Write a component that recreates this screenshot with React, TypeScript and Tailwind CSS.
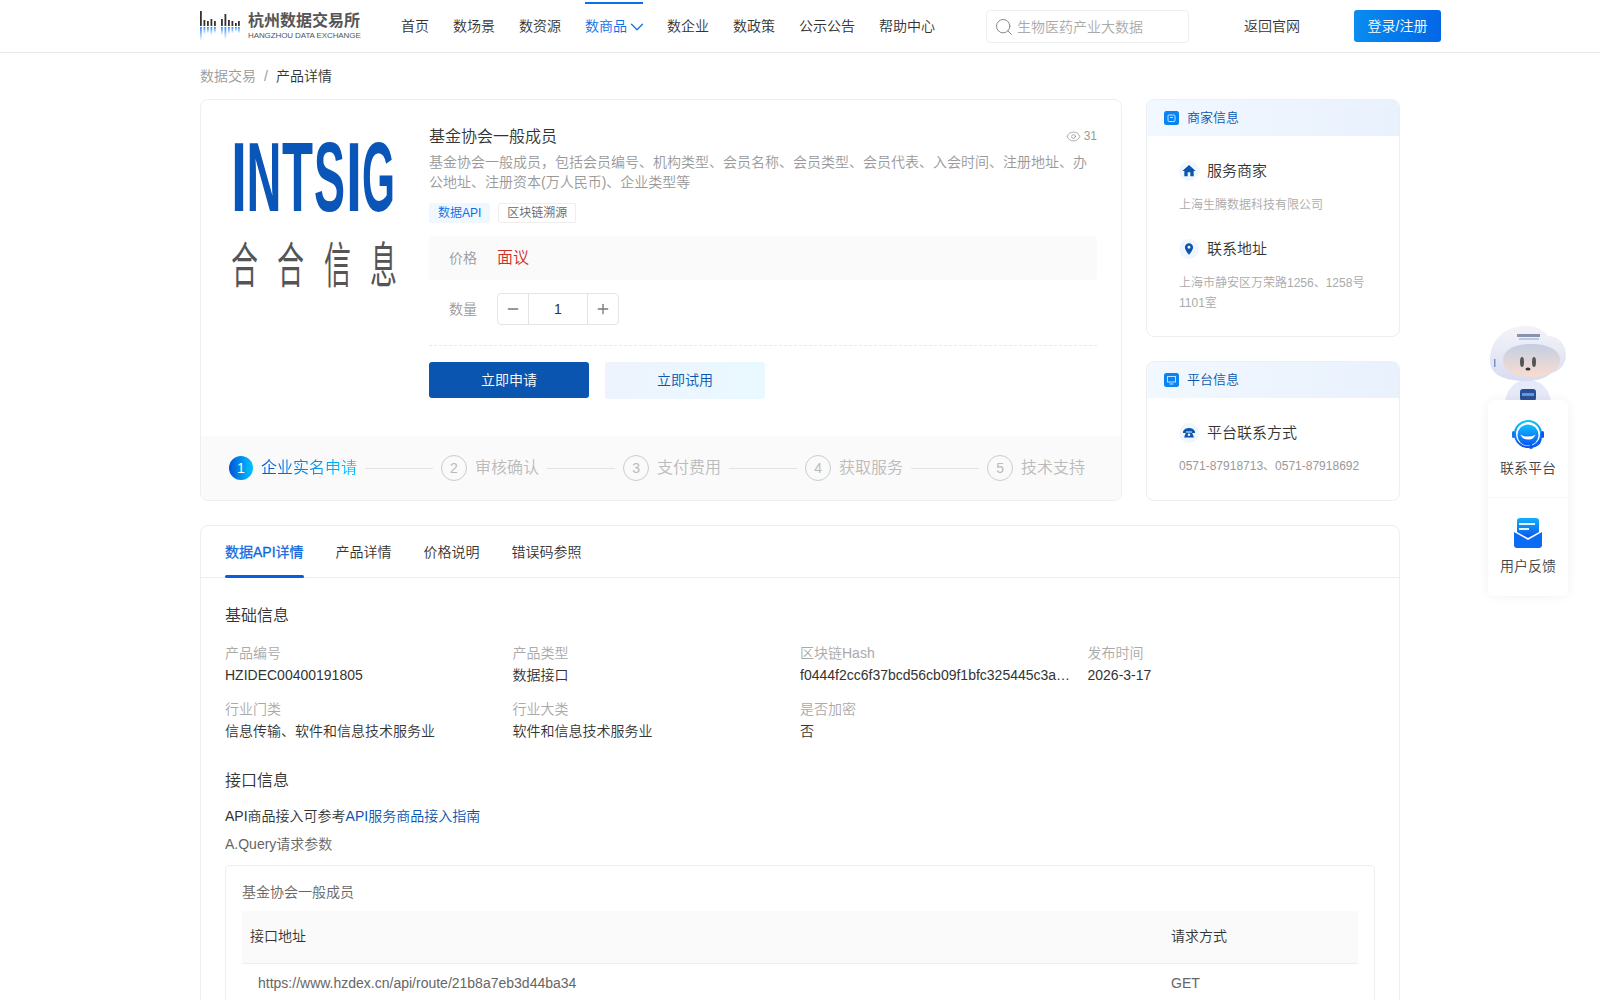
import React from "react";
import { ChevronDown, Eye, Minus, Plus, Search } from "lucide-react";
import { MdHome, MdLocationOn } from "react-icons/md";

const font = { fontFamily: '"Liberation Sans","Noto Sans CJK SC",sans-serif' };

function LogoBars() {
  return (
    <svg width="41" height="30" viewBox="0 0 41 30" className="shrink-0">
      <defs>
        <linearGradient id="lb" x1="0" y1="0" x2="0" y2="1">
          <stop offset="0" stopColor="#2f8cf5" />
          <stop offset="1" stopColor="#ffffff" />
        </linearGradient>
      </defs>
      {[[0, 15], [3.5, 6], [7, 5], [10.5, 7], [14, 5], [21, 7], [24.500, 12], [28, 6], [31.500, 5], [35, 3], [38, 5]].map(([x, h], i) => (
        <g key={i}>
          <rect x={x} y={15 - h} width="1.800" height={h} fill="#333" />
          <rect x={x} y={16} width="1.800" height={Math.min(14, h * 0.9 + 2)} fill="url(#lb)" />
        </g>
      ))}
    </svg>
  );
}

function Logo() {
  return (
    <div className="flex items-center gap-[7px] w-[162px] h-[30px]">
      <LogoBars />
      <div className="flex flex-col">
        <span className="text-[16px] leading-[18px] font-bold text-[#555] whitespace-nowrap">杭州数据交易所</span>
        <span className="text-[8px] leading-[11px] text-[#555] whitespace-nowrap tracking-[-0.1px]">HANGZHOU DATA EXCHANGE</span>
      </div>
    </div>
  );
}

function Header() {
  const items = ["首页", "数场景", "数资源", "数商品", "数企业", "数政策", "公示公告", "帮助中心"];
  return (
    <header className="h-[53px] border-b border-[#e8e8e8] bg-white pl-[200px] flex items-center">
      <Logo />
      <nav className="flex gap-6 ml-[39px] h-full">
        {items.map((t) =>
          t === "数商品" ? (
            <div key={t} className="relative flex items-center text-[14px] text-[#0a6fe8] pt-[1px]">
              <div className="absolute top-[2px] left-0 right-0 h-[2px] bg-[#0a6fe8]" />
              {t}
              <ChevronDown size={22} strokeWidth={1.3} className="-mr-[5px] -ml-[1px]" />
            </div>
          ) : (
            <div key={t} className="flex items-center text-[14px] text-[#333] pt-[1px]">{t}</div>
          )
        )}
      </nav>
      <div className="ml-[51px] w-[203px] h-[33px] border border-[#efefef] rounded-[4px] flex items-center pl-[7px] gap-[3px] mt-[1px]">
        <Search size={20} strokeWidth={1.2} className="text-[#888]" />
        <span className="text-[14px] text-[#aaa] pt-[1px]">生物医药产业大数据</span>
      </div>
      <div className="ml-[55px] text-[14px] text-[#333] pt-[1px]">返回官网</div>
      <div className="ml-[54px] w-[87px] h-[32px] rounded-[3px] bg-gradient-to-r from-[#0a8cf0] to-[#0566e6] text-white text-[14px] flex items-center justify-center">登录/注册</div>
    </header>
  );
}

function IntsigLogo() {
  const letters: [string, number, number][] = [
    ["I", 17, 16],
    ["N", 32.5, 35],
    ["T", 68, 31],
    ["S", 100, 31],
    ["I", 132, 16],
    ["G", 148, 33],
  ];
  const han: [string, number][] = [["合", 17], ["合", 63], ["信", 110], ["息", 156]];
  return (
    <div className="w-[200px] h-[200px] shrink-0">
      <svg width="200" height="200" viewBox="0 0 200 200">
        {letters.map(([c, x, l], i) => (
          <text key={i} x={x} y="111" textLength={l} lengthAdjust="spacingAndGlyphs" fontSize="98" fontWeight="700" fill="#0a55b8" fontFamily="Liberation Sans">{c}</text>
        ))}
        {han.map(([c, x], i) => (
          <text key={i} transform={`translate(${x},183) scale(1,1.8)`} fontSize="27" fontWeight="400" fill="#555" fontFamily="Noto Sans CJK SC">{c}</text>
        ))}
      </svg>
    </div>
  );
}

function Step({ n, label, last, active }: { n: number; label: string; last?: boolean; active?: boolean }) {
  return (
    <>
      {active ? (
        <div className="w-6 h-6 rounded-full bg-gradient-to-r from-[#0052d9] to-[#00c6ff] text-white text-[14px] flex items-center justify-center shrink-0">{n}</div>
      ) : (
        <div className="w-[26px] h-[26px] rounded-full border border-[#ccc] text-[#bbb] text-[14px] flex items-center justify-center shrink-0">{n}</div>
      )}
      <span className={active ? "text-[16px] bg-gradient-to-r from-[#0052d9] to-[#00c6ff] bg-clip-text text-transparent whitespace-nowrap" : "text-[16px] text-[#bbb] whitespace-nowrap"}>{label}</span>
      {!last && <div className="w-[68px] h-px bg-[#e2e2e2] shrink-0" />}
    </>
  );
}

function ProductCard() {
  return (
    <section className="w-[922px] h-[402px] border border-[#eee] rounded-[8px] bg-white overflow-hidden flex flex-col">
      <div className="flex flex-1 pl-[13px]">
        <IntsigLogo />
        <div className="ml-[15px] w-[668px] pt-[27px]">
          <div className="flex justify-between items-center h-[20px]">
            <span className="text-[16px] text-[#333]">基金协会一般成员</span>
            <span className="flex items-center gap-[3px] -mt-[2px] text-[12px] text-[#999]"><Eye size={15} strokeWidth={1.3} />31</span>
          </div>
          <p className="mt-[5px] text-[14px] leading-[20px] text-[#999]">基金协会一般成员，包括会员编号、机构类型、会员名称、会员类型、会员代表、入会时间、注册地址、办公地址、注册资本(万人民币)、企业类型等</p>
          <div className="flex gap-2 mt-[11px]">
            <span className="h-[20px] px-[9px] rounded-[2px] bg-[#f0f7ff] text-[12px] leading-[20px] text-[#0a6fe8]">数据API</span>
            <span className="h-[20px] px-[8px] rounded-[2px] border border-[#eee] text-[12px] leading-[18px] text-[#666]">区块链溯源</span>
          </div>
          <div className="mt-[13px] h-[44px] rounded-[4px] bg-[#fafafa] flex items-center pl-5 gap-5">
            <span className="text-[14px] text-[#999]">价格</span>
            <span className="text-[16px] text-[#d0302b]">面议</span>
          </div>
          <div className="mt-[13px] flex items-center pl-5 gap-5 h-[32px]">
            <span className="text-[14px] text-[#999]">数量</span>
            <div className="w-[122px] h-[32px] border border-[#e4e4e4] rounded-[4px] flex">
              <div className="w-[31px] flex items-center justify-center border-r border-[#e4e4e4] text-[#777]"><Minus size={16} /></div>
              <div className="flex-1 flex items-center justify-center text-[14px] text-[#333]">1</div>
              <div className="w-[31px] flex items-center justify-center border-l border-[#e4e4e4] text-[#777]"><Plus size={16} /></div>
            </div>
          </div>
          <div className="mt-[20px] border-t border-dashed border-[#eaeaea]" />
          <div className="mt-[16px] flex gap-4">
            <div className="w-[160px] h-[36px] rounded-[3px] bg-[#0955b0] text-white text-[14px] flex items-center justify-center">立即申请</div>
            <div className="w-[160px] h-[37px] rounded-[3px] bg-gradient-to-r from-[#eef3fd] to-[#e9f9ff] text-[#0955b0] text-[14px] flex items-center justify-center">立即试用</div>
          </div>
        </div>
      </div>
      <div className="h-[64px] bg-[#fafafa] flex items-center pl-[28px] gap-2">
        <Step n={1} label="企业实名申请" active />
        <Step n={2} label="审核确认" />
        <Step n={3} label="支付费用" />
        <Step n={4} label="获取服务" />
        <Step n={5} label="技术支持" last />
      </div>
    </section>
  );
}

function InfoHead({ title, kind }: { title: string; kind: "shop" | "screen" }) {
  return (
    <div className="h-[36px] bg-gradient-to-r from-[#f2f8ff] to-[#e9f1fd] flex items-center pl-[17px] gap-[8px]">
      <svg width="15" height="14" viewBox="0 0 15 14">
        <rect width="15" height="14" rx="2.500" fill="#0a84f0" />
        {kind === "shop" ? (
          <g fill="none" stroke="#bfe0ff" strokeWidth="1"><rect x="4" y="4" width="7" height="6.500" rx="1" /><path d="M6 6.500h3" /></g>
        ) : (
          <g fill="none" stroke="#bfe0ff" strokeWidth="1"><rect x="3.500" y="3.500" width="8" height="5.500" /><path d="M5.500 11h4" /></g>
        )}
      </svg>
      <span className="text-[13px] text-[#0955b0]">{title}</span>
    </div>
  );
}

function InfoRow({ icon, title }: { icon: React.ReactNode; title: string }) {
  return (
    <div className="flex items-center gap-[8px] h-[20px]">
      <div className="w-5 h-5 rounded-full bg-[#f0f6fd] flex items-center justify-center text-[#0955b0]">{icon}</div>
      <span className="text-[15px] text-[#333]">{title}</span>
    </div>
  );
}

function Side() {
  return (
    <aside className="w-[254px] flex flex-col gap-[24px]">
      <div className="h-[238px] border border-[#eee] rounded-[8px] overflow-hidden bg-white">
        <InfoHead title="商家信息" kind="shop" />
        <div className="pl-[32px] pr-[30px] pt-[25px]">
          <InfoRow icon={<MdHome size={16} />} title="服务商家" />
          <p className="mt-[14px] text-[12px] leading-[20px] text-[#aaa]">上海生腾数据科技有限公司</p>
          <div className="mt-[24px]"><InfoRow icon={<MdLocationOn size={14} />} title="联系地址" /></div>
          <p className="mt-[14px] text-[12px] leading-[20px] text-[#aaa]">上海市静安区万荣路1256、1258号1101室</p>
        </div>
      </div>
      <div className="h-[140px] border border-[#eee] rounded-[8px] overflow-hidden bg-white">
        <InfoHead title="平台信息" kind="screen" />
        <div className="pl-[32px] pr-[20px] pt-[25px]">
          <InfoRow
            icon={
              <svg width="12" height="10" viewBox="0 0 12 10" fill="#0955b0">
                <path d="M0 3.500C1 1 3.500 0 6 0s5 1 6 3.500V5H9V3.500H3V5H0z" />
                <path d="M3 4.500h6L11 9.500H1z" />
                <circle cx="6" cy="6.800" r="1.300" fill="#f0f6fd" />
              </svg>
            }
            title="平台联系方式"
          />
          <p className="mt-[13px] text-[12px] leading-[20px] text-[#999]">0571-87918713、0571-87918692</p>
        </div>
      </div>
    </aside>
  );
}

function Field({ k, v, cut }: { k: string; v: string; cut?: boolean }) {
  return (
    <div className="min-w-0 pr-4">
      <div className="text-[14px] leading-[22px] text-[#aaa]">{k}</div>
      <div className={"text-[14px] leading-[22px] text-[#333]" + (cut ? " truncate" : "")}>{v}</div>
    </div>
  );
}

function Detail() {
  const tabs = ["产品详情", "价格说明", "错误码参照"];
  return (
    <section className="mt-[24px] border border-[#eee] rounded-[8px] bg-white">
      <div className="h-[52px] border-b border-[#eee] flex pl-[24px] gap-8">
        <div className="relative text-[14px] text-[#0a66e0] [-webkit-text-stroke:0.3px] flex items-center pt-[2px]">
          数据API详情
          <div className="absolute left-0 right-0 -bottom-[1px] h-[3px] rounded-[2px] bg-[#0a5ce0]" />
        </div>
        {tabs.map((t) => (
          <div key={t} className="text-[14px] text-[#333] flex items-center pt-[2px]">{t}</div>
        ))}
      </div>
      <div className="px-[24px] pt-[26px]">
        <h3 className="text-[16px] leading-[24px] text-[#333]">基础信息</h3>
        <div className="mt-[14px] grid grid-cols-4 gap-y-[12px]">
          <Field k="产品编号" v="HZIDEC00400191805" />
          <Field k="产品类型" v="数据接口" />
          <Field k="区块链Hash" v="f0444f2cc6f37bcd56cb09f1bfc325445c3a9d7e81b2c4" cut />
          <Field k="发布时间" v="2026-3-17" />
          <Field k="行业门类" v="信息传输、软件和信息技术服务业" />
          <Field k="行业大类" v="软件和信息技术服务业" />
          <Field k="是否加密" v="否" />
        </div>
        <h3 className="mt-[27px] text-[16px] leading-[24px] text-[#333]">接口信息</h3>
        <p className="mt-[13px] text-[14px] leading-[20px] text-[#333]">API商品接入可参考<span className="text-[#0955b0]">API服务商品接入指南</span></p>
        <p className="mt-[8px] text-[14px] leading-[20px] text-[#666]">A.Query请求参数</p>
        <div className="mt-[11px] border border-[#eee] rounded-[4px] px-4 pt-[16px] pb-4">
          <div className="text-[14px] leading-[20px] text-[#666]">基金协会一般成员</div>
          <table className="mt-[9px] w-full table-fixed">
            <thead>
              <tr className="h-[52px] bg-[#fafafa] border-b border-[#eee]">
                <th className="pl-2 text-left font-[350] text-[14px] text-[#333]">接口地址</th>
                <th className="w-[187px] text-left font-[350] text-[14px] text-[#333]">请求方式</th>
              </tr>
            </thead>
            <tbody>
              <tr className="h-[40px]">
                <td className="pl-4 text-[14px] text-[#666]">https://www.hzdex.cn/api/route/21b8a7eb3d44ba34</td>
                <td className="text-[14px] text-[#666]">GET</td>
              </tr>
            </tbody>
          </table>
        </div>
      </div>
    </section>
  );
}

function Robot() {
  return (
    <svg width="78" height="76" viewBox="0 0 78 76">
      <defs>
        <linearGradient id="rh" x1="0" y1="0" x2="0" y2="1">
          <stop offset="0" stopColor="#f4f4f8" />
          <stop offset="1" stopColor="#d8dcf2" />
        </linearGradient>
        <linearGradient id="rf" x1="0" y1="0" x2="0" y2="1">
          <stop offset="0" stopColor="#c3cfe2" />
          <stop offset="1" stopColor="#f9dccf" />
        </linearGradient>
      </defs>
      <path d="M16 76c3-14 11-21 23-21s20 7 23 21z" fill="#e6e9f8" />
      <rect x="31" y="64" width="16" height="12" rx="3" fill="#2c5096" />
      <rect x="33" y="68" width="12" height="3" fill="#5d9be0" />
      <path d="M1 36C1 14 16 2 34 1c12-1 20 4 25 10 10 0 18 8 18 19 0 10-7 16-14 18-8 6-16 8-26 8C16 56 1 50 1 36z" fill="url(#rh)" />
      <path d="M14 35c0-10 11-16 28-16s29 6 29 16c0 10-12 17-29 17S14 45 14 35z" fill="url(#rf)" />
      <ellipse cx="33" cy="37" rx="2" ry="5" fill="#555" />
      <ellipse cx="45" cy="37" rx="2" ry="5" fill="#555" />
      <ellipse cx="39" cy="44" rx="2.500" ry="1.500" fill="#333" />
      <rect x="28" y="9" width="23" height="3" fill="#8b93a8" />
      <rect x="30" y="13" width="20" height="2" fill="#b5cbee" />
      <rect x="5" y="34" width="1.500" height="8" fill="#7f8fc4" />
    </svg>
  );
}

function Floats() {
  return (
    <>
      <div className="absolute left-[1489px] top-[325px]"><Robot /></div>
      <div className="absolute left-[1488px] top-[400px] w-[80px] h-[196px] rounded-[6px] bg-white shadow-[0_0_12px_rgba(0,0,0,0.06)] flex flex-col">
        <div className="h-[98px] flex flex-col items-center pt-[20px] gap-[8px] border-b border-[#f8f8f8]">
          <svg width="32" height="30" viewBox="0 0 32 30">
            <defs>
              <linearGradient id="s1" x1="0" y1="0" x2="0" y2="1">
                <stop offset="0" stopColor="#10c0ff" />
                <stop offset="1" stopColor="#0a55f0" />
              </linearGradient>
            </defs>
            <circle cx="16" cy="14" r="13" fill="none" stroke="url(#s1)" strokeWidth="2" />
            <circle cx="16" cy="15" r="10.500" fill="url(#s1)" />
            <path d="M10.500 16.500c2 3 9 3 11 0-2 1-9 1-11 0z" fill="#fff" stroke="#fff" strokeWidth="1.500" />
            <rect x="0" y="11" width="3" height="7" rx="1.500" fill="#0a7cf0" />
            <rect x="29" y="11" width="3" height="7" rx="1.500" fill="#0a55f0" />
            <path d="M29 18c0 6-5 9-9 9" fill="none" stroke="#0a55f0" strokeWidth="1.500" />
            <circle cx="19" cy="27" r="2" fill="#0a55f0" />
          </svg>
          <span className="text-[14px] leading-[20px] text-[#444]">联系平台</span>
        </div>
        <div className="h-[98px] flex flex-col items-center pt-[20px] gap-[8px]">
          <svg width="30" height="30" viewBox="0 0 30 30">
            <defs>
              <linearGradient id="s2" x1="0" y1="0" x2="0" y2="1">
                <stop offset="0" stopColor="#12b0fa" />
                <stop offset="1" stopColor="#0a55f0" />
              </linearGradient>
            </defs>
            <path d="M4 3a3 3 0 0 1 3-3h16a3 3 0 0 1 3 3v11l-11 6-11-6z" fill="url(#s2)" />
            <rect x="6" y="5" width="16" height="2" fill="#dff2ff" />
            <rect x="6" y="10" width="10" height="2" fill="#dff2ff" />
            <path d="M1 14l14 8 14-8v13a3 3 0 0 1-3 3H4a3 3 0 0 1-3-3z" fill="#0a6cf4" />
          </svg>
          <span className="text-[14px] leading-[20px] text-[#444]">用户反馈</span>
        </div>
      </div>
    </>
  );
}

export default function App() {
  return (
    <div className="relative h-[1000px] overflow-hidden bg-white font-[350]" style={font}>
      <Header />
      <div className="w-[1200px] ml-[200px]">
        <div className="h-[46px] flex items-center text-[14px]">
          <span className="text-[#999]">数据交易</span>
          <span className="mx-2 text-[#999]">/</span>
          <span className="text-[#333]">产品详情</span>
        </div>
        <div className="flex gap-6">
          <ProductCard />
          <Side />
        </div>
        <Detail />
      </div>
      <Floats />
    </div>
  );
}
